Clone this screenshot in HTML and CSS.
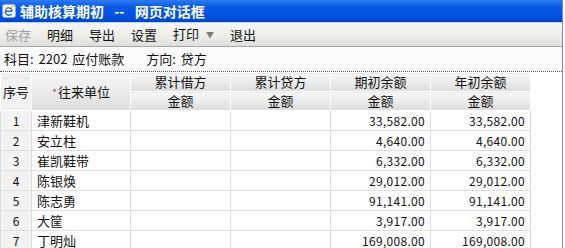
FILE: index.html
```html
<!DOCTYPE html>
<html lang="zh-CN">
<head>
    <meta charset="UTF-8">
    <title>辅助核算期初</title>
    <link rel="stylesheet" href="styles.css">
</head>
<body>
    <div class="window">
        <div class="titlebar">
            <svg class="ie" width="14" height="14" viewBox="0 0 14 14">
                <rect x="0.5" y="0.5" width="13" height="13" rx="2" fill="#fff"/>
                <path d="M10.5 8H4.2C4.4 9.8 5.5 10.6 7 10.6C8 10.6 8.8 10.2 9.4 9.6L10.3 10.6C9.4 11.5 8.3 12 7 12C4.4 12 2.7 10.2 2.7 7.5C2.7 4.8 4.5 3 7 3C9.4 3 10.6 4.8 10.6 7.2ZM4.3 6.6H9C8.8 5.2 8 4.4 6.9 4.4C5.6 4.4 4.6 5.2 4.3 6.6Z" fill="#2a6ad8"/>
                <path d="M1.5 9C3 5 9 2.5 12.8 2.2" stroke="#f0b400" stroke-width="1" fill="none"/>
            </svg>
            <span class="title">辅助核算期初 -- 网页对话框</span>
        </div>
        <div class="menubar">
            <span class="item disabled">保存</span>
            <span class="item">明细</span>
            <span class="item">导出</span>
            <span class="item">设置</span>
            <span class="item">打印 <span class="arrow">▼</span></span>
            <span class="item">退出</span>
        </div>
        <div class="info">
            <span>科目: 2202 应付账款</span>
            <span>方向: 贷方</span>
        </div>
        <div class="grid">
            <table>
                <colgroup>
                    <col class="c-seq">
                    <col class="c-name">
                    <col class="c-amt">
                    <col class="c-amt">
                    <col class="c-amt">
                    <col class="c-amt">
                </colgroup>
                <thead>
                    <tr>
                        <th rowspan="2" class="seq-head">序号</th>
                        <th rowspan="2"><span class="req">*</span>往来单位</th>
                        <th>累计借方</th>
                        <th>累计贷方</th>
                        <th>期初余额</th>
                        <th>年初余额</th>
                    </tr>
                    <tr>
                        <th>金额</th>
                        <th>金额</th>
                        <th>金额</th>
                        <th>金额</th>
                    </tr>
                </thead>
                <tbody id="rows"></tbody>
            </table>
        </div>
    </div>

    <script>
        const data = [
            ['津新鞋机', '33,582.00'],
            ['安立柱', '4,640.00'],
            ['崔凯鞋带', '6,332.00'],
            ['陈银焕', '29,012.00'],
            ['陈志勇', '91,141.00'],
            ['大筐', '3,917.00'],
            ['丁明灿', '169,008.00']
        ];
        let tbody = document.getElementById('rows');
        data.forEach(function (row, i) {
            let tr = document.createElement('tr');
            tr.innerHTML = '<td class="seq">' + (i + 1) + '</td>' +
                '<td class="name">' + row[0] + '</td>' +
                '<td></td><td></td>' +
                '<td class="num">' + row[1] + '</td>' +
                '<td class="num">' + row[1] + '</td>';
            tbody.appendChild(tr);
        });
    </script>
</body>
</html>
```

FILE: styles.css
```css
body {
    margin: 0;
    background-color: #fff;
    font-family: "Noto Sans CJK SC", sans-serif;
    font-size: 13px;
    line-height: 18px;
    color: #111;
}
.window {
    width: 562px;
    height: 248px;
    overflow: hidden;
    border-right: 1px solid #8a8a8a;
    background-color: #fafafa;
}
.titlebar {
    height: 22px;
    display: flex;
    align-items: center;
    gap: 4px;
    padding-left: 2px;
    background: linear-gradient(#2e7cf0, #0a5ae8 30%, #0050e0 80%, #0043c4);
    border-bottom: 1px solid #b8d8f8;
    color: #fff;
    font-weight: bold;
    font-size: 14px;
}
.title {
    word-spacing: 7px;
}
.menubar {
    height: 23px;
    display: flex;
    align-items: center;
    gap: 16px;
    padding-left: 5px;
    background: linear-gradient(#f7f7f5, #ecece8 60%, #dededa);
    border-bottom: 1px solid #a8a8a8;
}
.item.disabled {
    color: #a0a0a0;
}
.arrow {
    font-size: 8px;
    color: #777;
    margin-left: 4px;
    vertical-align: 1px;
}
.info {
    height: 24px;
    display: flex;
    align-items: center;
    gap: 22px;
    padding-left: 4px;
    background-color: #fbfbfb;
    border-bottom: 1px dotted #555;
    word-spacing: 2px;
}
.grid {
    background-color: #fff;
}
table {
    border-collapse: collapse;
    table-layout: fixed;
    width: 530px;
}
.c-seq {
    width: 31px;
}
.c-name {
    width: 99px;
}
.c-amt {
    width: 100px;
}
th {
    height: 18px;
    padding: 0;
    font-weight: normal;
    background: linear-gradient(#f6f6f6, #ebebeb 50%, #dcdcdc);
    border: 1px solid #fff;
    text-align: center;
}
th.seq-head {
    background: #f0f0f0;
}
.req {
    color: #e0306e;
    font-size: 11px;
    margin-right: 1px;
}
td {
    height: 19px;
    padding: 0 5px;
    border: 1px solid #dedede;
    white-space: nowrap;
}
td.seq {
    background-color: #f3f3f3;
    text-align: center;
    padding: 0;
    font-size: 12px;
}
td.num {
    text-align: right;
    font-size: 12px;
    letter-spacing: 0.3px;
}
```
